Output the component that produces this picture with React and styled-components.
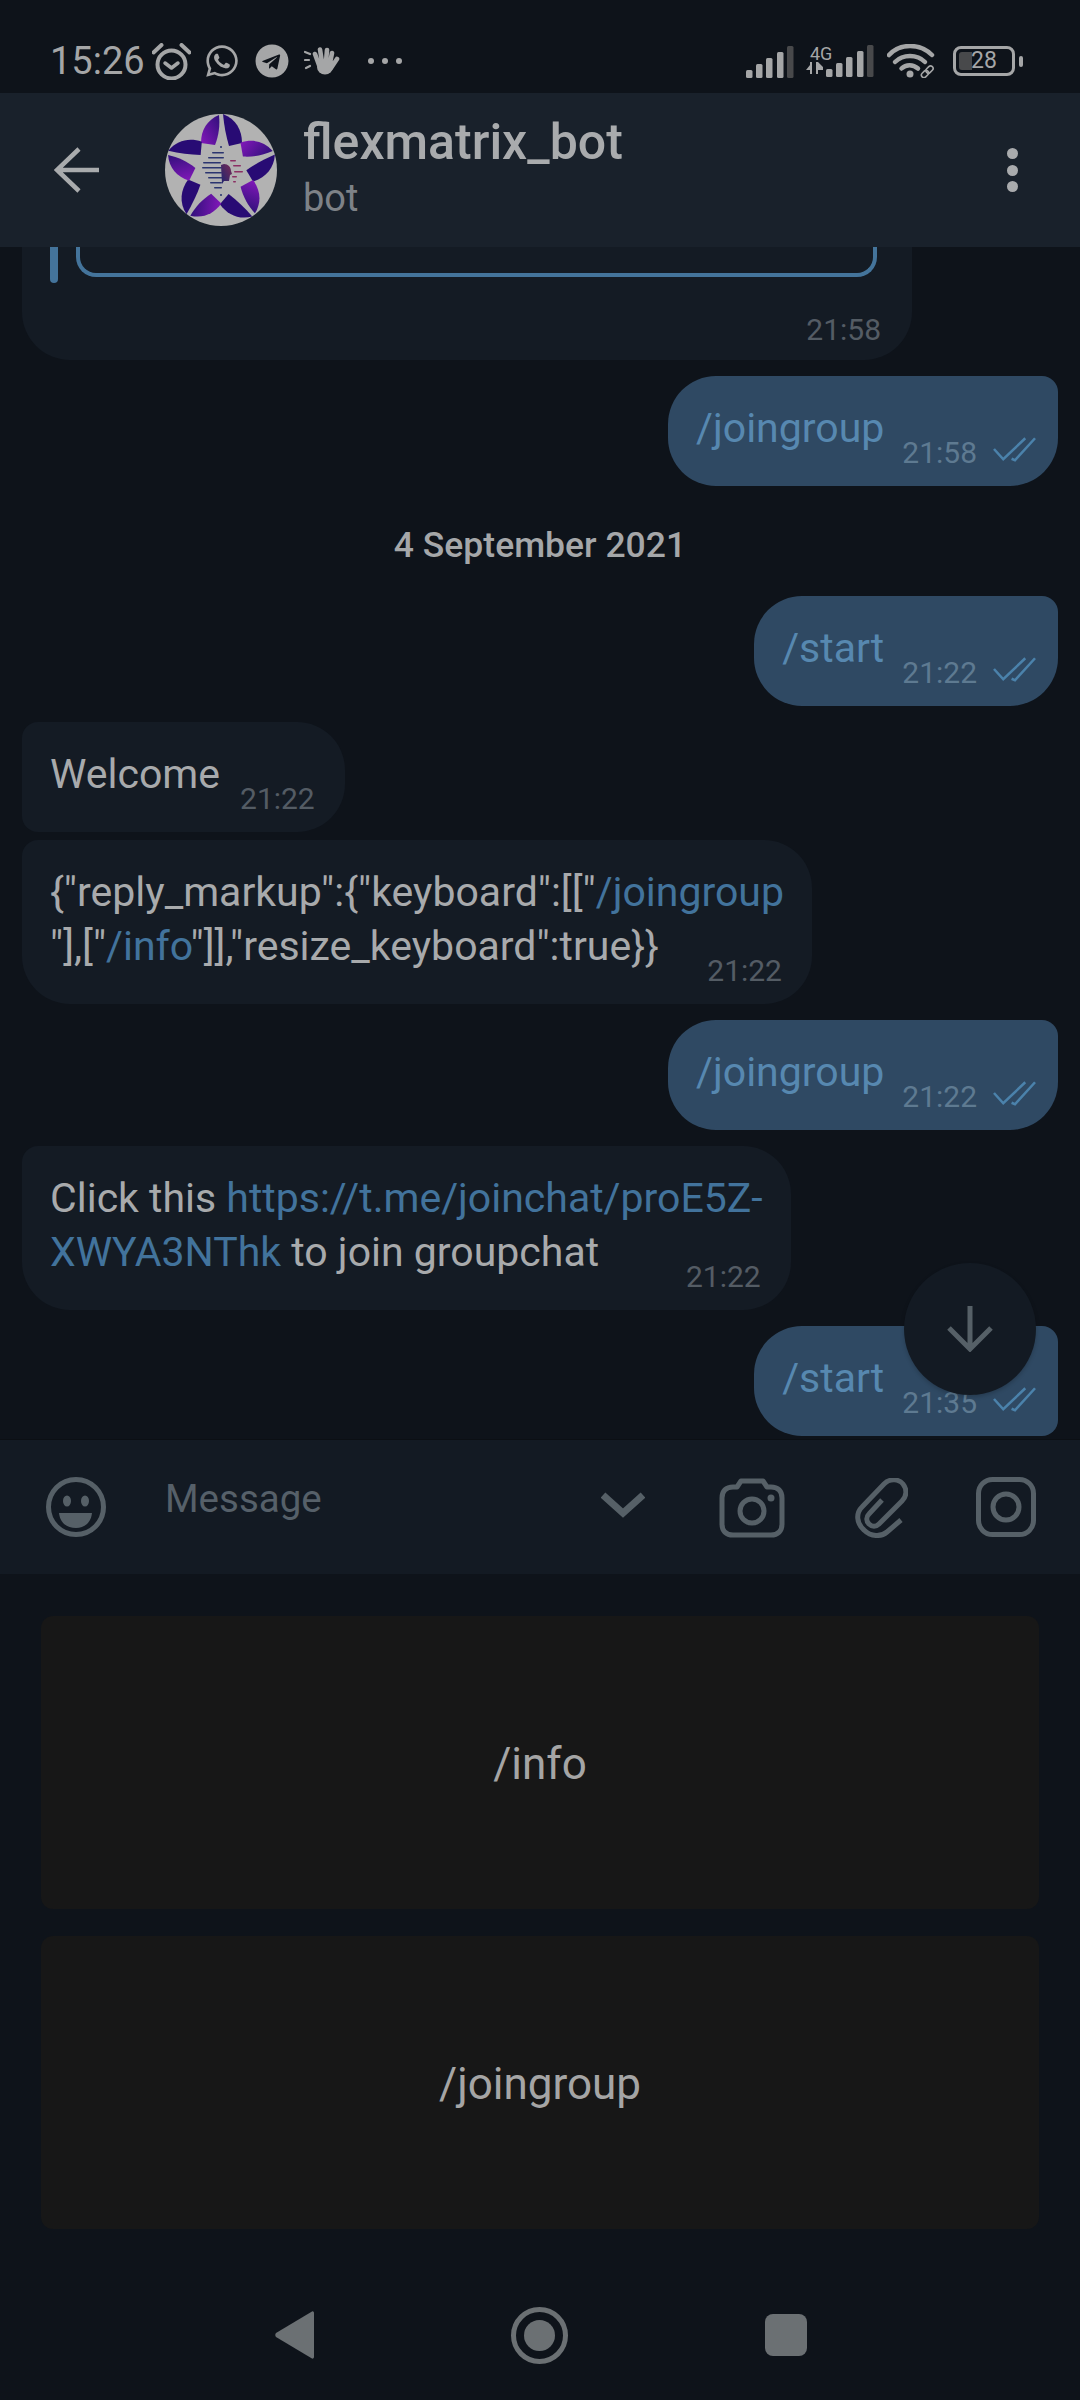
import React from 'react';
import styled, { createGlobalStyle } from 'styled-components';
import { FaWhatsapp, FaTelegram } from 'react-icons/fa';

const Global = createGlobalStyle`
  html, body { margin: 0; padding: 0; background: #0e131a; }
  * { box-sizing: border-box; }
  body { font-family: Roboto, "Liberation Sans", sans-serif; }
`;

const Page = styled.div`
  width: 1080px;
  height: 2400px;
  display: flex;
  flex-direction: column;
  background: #0e131a;
  overflow: hidden;
  color: #a8aaac;
`;

const StatusBar = styled.div`
  height: 93px;
  flex: none;
  display: flex;
  align-items: center;
  padding: 29px 57px 0 50px;
  color: #a5a6a7;
`;
const Clock = styled.span`
  font-size: 38px;
  line-height: 44px;
`;
const Slot = styled.span`
  display: flex;
  margin-left: ${p => p.$ml || 0}px;
  margin-top: ${p => p.$mt || 0}px;
`;
const RightGroup = styled.div`
  margin-left: auto;
  display: flex;
  align-items: center;
`;
const NetBlock = styled.div`
  width: 20px;
  margin-left: 12px;
  display: flex;
  flex-direction: column;
  align-items: flex-start;
`;
const NetLabel = styled.span`
  font-size: 18px;
  line-height: 17px;
  color: #a5a6a7;
  margin-left: 4px;
  margin-top: -3px;
`;
const Battery = styled.div`
  position: relative;
  width: 62px;
  height: 30px;
  margin-left: 18px;
  border: 3px solid #a5a6a7;
  border-radius: 8px;
  padding-left: 3px;
  display: flex;
  align-items: center;
`;
const BatteryFill = styled.span`
  width: 13px;
  height: 18px;
  background: #48494b;
  border-radius: 3px 0 0 3px;
`;
const BatteryText = styled.span`
  font-size: 23px;
  line-height: 24px;
  color: #a5a6a7;
  margin-left: -1px;
`;
const BatteryCap = styled.span`
  width: 4px;
  height: 11px;
  margin-left: 4px;
  background: #a5a6a7;
  border-radius: 2px;
`;

const Header = styled.div`
  height: 154px;
  flex: none;
  background: #19212b;
  display: flex;
  align-items: center;
  padding: 0 62px 0 54px;
  position: relative;
  z-index: 2;
`;
const HeaderInfo = styled.div`
  margin-left: 26px;
  display: flex;
  flex-direction: column;
  flex: 1;
`;
const Title = styled.div`
  font-size: 50px;
  line-height: 53px;
  font-weight: 500;
  color: #a9abad;
`;
const Subtitle = styled.div`
  font-size: 38px;
  line-height: 53px;
  margin-top: 3px;
  color: #7e8287;
`;
const AvatarSlot = styled.div`
  margin-left: 66px;
  display: flex;
`;
const MoreDots = styled.div`
  display: flex;
  flex-direction: column;
  gap: 5.5px;
`;
const MoreDot = styled.span`
  width: 11px;
  height: 11px;
  border-radius: 50%;
  background: #a9abad;
`;

const Chat = styled.div`
  position: relative;
  height: 1192px;
  flex: none;
  display: flex;
  flex-direction: column;
  overflow: hidden;
  padding: 0 22px;
`;
const TopBubble = styled.div`
  height: 113px;
  width: 890px;
  background: #141b24;
  border-radius: 0 0 48px 48px;
  padding-left: 28px;
  position: relative;
  display: flex;
  flex-direction: column;
`;
const InlineRow = styled.div`
  display: flex;
  gap: 18px;
  align-items: flex-start;
`;
const QuoteBar = styled.span`
  width: 8px;
  height: 36px;
  background: #44749b;
  border-radius: 0 0 4px 4px;
`;
const KeyBox = styled.div`
  width: 801px;
  height: 30px;
  border: 4px solid #44749b;
  border-top: none;
  border-radius: 0 0 20px 20px;
`;
const TopMeta = styled.span`
  align-self: flex-end;
  margin: 32px 31px 0 0;
  font-size: 30px;
  line-height: 30px;
  color: #545c64;
`;
const Bubble = styled.div`
  align-self: ${p => (p.$out ? 'flex-end' : 'flex-start')};
  margin-top: ${p => p.$mt}px;
  background: ${p => (p.$out ? '#2f4963' : '#141b24')};
  border-radius: ${p => p.$radius};
  padding: 25px ${p => (p.$out ? 22 : 28)}px 18px 28px;
  display: flex;
  flex-direction: ${p => (p.$multi ? 'column' : 'row')};
  flex: none;
`;
const MsgText = styled.div`
  font-size: 41px;
  line-height: 54px;
  white-space: nowrap;
  color: ${p => (p.$out ? '#5788b0' : '#a8aaac')};
`;
const Link = styled.span`
  color: #42739c;
`;
const Meta = styled.div`
  display: flex;
  align-items: center;
  flex: none;
  height: 30px;
  margin-top: 37px;
  margin-left: ${p => (p.$out ? 18 : 20)}px;
  margin-right: ${p => (p.$out ? 0 : 2)}px;
  font-size: 30px;
  line-height: 30px;
  color: ${p => (p.$out ? '#5e7a91' : '#545c64')};
`;
const MultiMeta = styled(Meta)`
  align-self: flex-end;
  margin-top: -17px;
`;
const Check = styled.svg`
  margin-left: 16px;
  margin-top: -7px;
`;
const DateLabel = styled.div`
  height: 110px;
  flex: none;
  display: flex;
  align-items: center;
  justify-content: center;
  padding-top: 8px;
  font-size: 35.5px;
  font-weight: 500;
  color: #a5a7a9;
`;
const Fab = styled.div`
  position: absolute;
  left: 904px;
  top: 1016px;
  width: 132px;
  height: 132px;
  border-radius: 50%;
  background: #131a23;
  box-shadow: 0 2px 4px rgba(0,0,0,.2);
  display: flex;
  align-items: center;
  justify-content: center;
`;

const InputBar = styled.div`
  height: 135px;
  flex: none;
  background: #131a23;
  border-top: 1px solid #0b0f14;
  display: flex;
  align-items: flex-start;
  padding: 37px 44px 0 46px;
`;
const Placeholder = styled.div`
  margin-left: 59px;
  flex: 1;
  font-size: 38.5px;
  line-height: 44px;
  color: #566069;
`;
const BarIcon = styled.svg`
  flex: none;
  margin-left: ${p => p.$ml || 0}px;
  margin-top: ${p => p.$mt || 0}px;
`;

const Keyboard = styled.div`
  flex: none;
  display: flex;
  flex-direction: column;
  gap: 27px;
  padding: 42px 41px 0;
`;
const Key = styled.div`
  height: 293px;
  background: #171717;
  border-radius: 12px;
  padding-top: 3px;
  display: flex;
  align-items: center;
  justify-content: center;
  font-size: 44px;
  color: #a5a5a5;
`;
const NavBar = styled.div`
  flex: 1;
  display: flex;
  align-items: center;
  justify-content: center;
  gap: 197px;
  padding: 41px 0 0 2px;
`;
const NavSquare = styled.span`
  width: 42px;
  height: 42px;
  border-radius: 8px;
  background: #6b7073;
`;

const icon = '#566067';

const Signal = () => (
  <svg width="48" height="32" viewBox="0 0 48 32">
    {[[0, 8], [10, 14], [20, 20], [31, 26], [41, 32]].map(([x, h], i) => (
      <rect key={x} x={x} y={32 - h} width="6.5" height={h} rx="1.5" fill={i === 4 ? '#48494b' : '#a5a6a7'} />
    ))}
  </svg>
);

const Alarm = () => (
  <svg width="39" height="37" viewBox="0 0 39 37" fill="none" stroke="#a5a6a7">
    <circle cx="19.5" cy="21.5" r="14" strokeWidth="4" />
    <path d="M1.5 9.5 9.5 2M37.5 9.5 29.5 2" strokeWidth="4" strokeLinecap="round" />
    <path d="M13 20l6.5 5 6.5-5" strokeWidth="3.5" strokeLinecap="round" strokeLinejoin="round" />
  </svg>
);

const WaveHand = () => (
  <svg width="36" height="30" viewBox="0 0 36 30" fill="none" stroke="#a5a6a7" strokeLinecap="round">
    <path d="M1 6 6 8M1 14H5M2 22 6 20" strokeWidth="2.2" />
    <path d="M15 19 11 8M18 16 16 3.5M22 16 23 4M26 17 28 7M27 22 33 13" strokeWidth="4.6" />
    <ellipse cx="21" cy="21" rx="8" ry="7.5" fill="#a5a6a7" stroke="none" />
  </svg>
);

const Wifi = () => (
  <svg width="48" height="34" viewBox="0 0 48 34" fill="none" stroke="#a5a6a7" strokeLinecap="round">
    <path d="M2 11C13 -1 33 -1 45 11" strokeWidth="4.5" />
    <path d="M8 18C16 10 30 10 38 18" strokeWidth="4.5" />
    <path d="M14.5 24.5C19 20 26 20 31 24.5" strokeWidth="4.5" />
    <circle cx="23" cy="30" r="3.5" fill="#a5a6a7" stroke="none" />
    <g strokeWidth="1.6">
      <rect x="34" y="27.5" width="8" height="5" rx="2.5" transform="rotate(-45 38 30)" fill="#0e131a" />
      <rect x="38.5" y="23" width="8" height="5" rx="2.5" transform="rotate(-45 42.5 25.5)" />
    </g>
  </svg>
);

const Avatar = () => (
  <svg width="112" height="112" viewBox="-56 -56 112 112">
    <defs>
      <linearGradient id="petalA" x1="0" y1="1" x2="1" y2="0">
        <stop offset="0" stopColor="#8418bb" />
        <stop offset="1" stopColor="#30107a" />
      </linearGradient>
      <linearGradient id="head" x1="0" y1="1" x2="1" y2="0">
        <stop offset="0" stopColor="#1c2470" />
        <stop offset="1" stopColor="#7a2a55" />
      </linearGradient>
    </defs>
    <circle r="56" fill="#b2b2b2" />
    {[0, 72, 144, 216, 288].map(a => (
      <g key={a} transform={`rotate(${a})`}>
        <path d="M-2 -55C-14 -50 -20 -40 -20 -27L-6 -25C-2 -35 -1 -45 -2 -55Z" fill="url(#petalA)" />
        <path d="M2 -56C3 -45 5 -34 8 -24L21 -27C21 -40 15 -51 2 -56Z" fill="#280b74" />
      </g>
    ))}
    {[[-9, -18, 12], [-13, -13, 16], [-18, -8, 18], [-19, -3, 20], [-16, 2, 17], [-13, 7, 15], [-11, 12, 12], [-7, 17, 8]].map(([x, y, w]) => (
      <rect key={y} x={x} y={y} width={w} height="1.5" rx="0.75" fill="#2b3570" />
    ))}
    {[[9, -10, 6], [12, -5, 8], [13, 1, 9], [11, 6, 5], [12, 11, 3]].map(([x, y, w]) => (
      <rect key={y} x={x} y={y} width={w} height="1.5" rx="0.75" fill="#8b2f63" />
    ))}
    <path d="M3 -6C7 -6 10 -3 10 1L11 4 9 5 8 11 3 11 1 14 0 -5Z" fill="url(#head)" />
    <circle cy="-23" r="1" fill="#23306e" />
    <circle cy="25" r="1" fill="#23306e" />
  </svg>
);

const Ticks = () => (
  <Check width="43" height="25" viewBox="0 0 44 25" fill="none" stroke="#4b82ab" strokeWidth="2.6">
    <path d="M1 12 10.5 22.5 33 1" />
    <path d="M19 22 22.5 23.5 43 1" />
  </Check>
);

const OUT = '48px 16px 48px 48px';
const OUT_LAST = '48px 16px 16px 48px';
const IN_MID = '16px 48px 48px 16px';
const IN = '16px 48px 48px 48px';

export default function App() {
  return (
    <Page>
      <Global />
      <StatusBar>
        <Clock>15:26</Clock>
        <Slot $ml={7}><Alarm /></Slot>
        <Slot $ml={13}><FaWhatsapp size={36} /></Slot>
        <Slot $ml={15}><FaTelegram size={34} /></Slot>
        <Slot $ml={15}><WaveHand /></Slot>
        <Slot $ml={27}>
          <svg width="36" height="8" viewBox="0 0 36 8" fill="#a5a6a7">
            <circle cx="4" cy="4" r="3" /><circle cx="18" cy="4" r="3" /><circle cx="32" cy="4" r="3" />
          </svg>
        </Slot>
        <RightGroup>
          <Slot $mt={2}><Signal /></Slot>
          <NetBlock>
            <NetLabel>4G</NetLabel>
            <svg width="20" height="12" viewBox="0 0 20 12" fill="#a5a6a7">
              <path d="M6 0V12H4V8H0L4 3V0ZM10 0H12L17 5V8H12V12H10Z" />
            </svg>
          </NetBlock>
          <Slot><Signal /></Slot>
          <Slot $ml={13}><Wifi /></Slot>
          <Battery>
            <BatteryFill />
            <BatteryText>28</BatteryText>
          </Battery>
          <BatteryCap />
        </RightGroup>
      </StatusBar>

      <Header>
        <svg width="45" height="46" viewBox="0 0 45 46" fill="none" stroke="#a9abad" strokeWidth="4.5">
          <path d="M45 23H3M25 2 3 23l22 21" />
        </svg>
        <AvatarSlot><Avatar /></AvatarSlot>
        <HeaderInfo>
          <Title>flexmatrix_bot</Title>
          <Subtitle>bot</Subtitle>
        </HeaderInfo>
        <MoreDots><MoreDot /><MoreDot /><MoreDot /></MoreDots>
      </Header>

      <Chat>
        <TopBubble>
          <InlineRow>
            <QuoteBar />
            <KeyBox />
          </InlineRow>
          <TopMeta>21:58</TopMeta>
        </TopBubble>

        <Bubble $out $mt={16} $radius={OUT}>
          <MsgText $out>/joingroup</MsgText>
          <Meta $out>21:58<Ticks /></Meta>
        </Bubble>

        <DateLabel>4 September 2021</DateLabel>

        <Bubble $out $mt={0} $radius={OUT}>
          <MsgText $out>/start</MsgText>
          <Meta $out>21:22<Ticks /></Meta>
        </Bubble>

        <Bubble $mt={16} $radius={IN_MID}>
          <MsgText>Welcome</MsgText>
          <Meta>21:22</Meta>
        </Bubble>

        <Bubble $multi $mt={8} $radius={IN}>
          <MsgText>
            {'{"reply_markup":{"keyboard":[["'}<Link>/joingroup</Link><br />
            {'"],["'}<Link>/info</Link>{'"]],"resize_keyboard":true}}'}
          </MsgText>
          <MultiMeta>21:22</MultiMeta>
        </Bubble>

        <Bubble $out $mt={16} $radius={OUT}>
          <MsgText $out>/joingroup</MsgText>
          <Meta $out>21:22<Ticks /></Meta>
        </Bubble>

        <Bubble $multi $mt={16} $radius={IN}>
          <MsgText>
            Click this <Link>https://t.me/joinchat/proE5Z-</Link><br />
            <Link>XWYA3NThk</Link> to join groupchat
          </MsgText>
          <MultiMeta>21:22</MultiMeta>
        </Bubble>

        <Bubble $out $mt={16} $radius={OUT_LAST}>
          <MsgText $out>/start</MsgText>
          <Meta $out>21:35<Ticks /></Meta>
        </Bubble>

        <Fab>
          <svg width="46" height="46" viewBox="0 0 46 46" fill="none" stroke={icon} strokeWidth="5">
            <path d="M23 0V42M2 22 23 43 44 22" />
          </svg>
        </Fab>
      </Chat>

      <InputBar>
        <svg width="60" height="60" viewBox="0 0 60 60" fill="none" stroke={icon} strokeWidth="5">
          <circle cx="30" cy="30" r="27.5" />
          <ellipse cx="21" cy="24" rx="4" ry="5.5" fill={icon} stroke="none" />
          <ellipse cx="39" cy="24" rx="4" ry="5.5" fill={icon} stroke="none" />
          <path d="M13 36H46C45 46 38 51 30 51C21 51 14 46 13 36Z" fill={icon} stroke="none" />
        </svg>
        <Placeholder>Message</Placeholder>
        <BarIcon width="44" height="26" viewBox="0 0 44 26" fill="none" stroke={icon} strokeWidth="7" $mt={15}>
          <path d="M2 3 22 21 42 3" />
        </BarIcon>
        <BarIcon width="66" height="60" viewBox="0 0 66 60" fill="none" stroke={icon} strokeWidth="5" $ml={74} $mt={1}>
          <path d="M18 9 22 3H44L48 9H52C59 9 63 13 63 20V46C63 53 59 57 52 57H14C7 57 3 53 3 46V20C3 13 7 9 14 9Z" strokeLinejoin="round" />
          <circle cx="33" cy="33" r="12" />
          <circle cx="52" cy="20" r="3.5" fill={icon} stroke="none" />
        </BarIcon>
        <BarIcon width="53" height="60" viewBox="0 0 53 60" fill="none" stroke={icon} strokeWidth="5" $ml={70} $mt={1}>
          <path d="M46 42 32 54C26 59 16 59 9 52 1 45 1 35 7 29L29 6C35 0 44 1 48 6 52 11 52 18 47 23L24 46C21 49 17 49 14 46 11 43 11 39 14 36L27 22" />
        </BarIcon>
        <BarIcon width="60" height="60" viewBox="0 0 60 60" fill="none" stroke={icon} strokeWidth="5" $ml={68}>
          <rect x="2.5" y="2.5" width="55" height="55" rx="14" />
          <circle cx="30" cy="30" r="13" />
        </BarIcon>
      </InputBar>

      <Keyboard>
        <Key>/info</Key>
        <Key>/joingroup</Key>
      </Keyboard>

      <NavBar>
        <svg width="39" height="48" viewBox="0 0 39 48" fill="#6b7073">
          <path d="M1 22 37 .5C38 0 39 1 39 2V46C39 47 38 48 37 47.5L1 26C0 25 0 23 1 22Z" />
        </svg>
        <svg width="57" height="57" viewBox="0 0 57 57" fill="none">
          <circle cx="28.5" cy="28.5" r="26" stroke="#6b7073" strokeWidth="5" />
          <circle cx="28.5" cy="28.5" r="15.5" fill="#6b7073" />
        </svg>
        <NavSquare />
      </NavBar>
    </Page>
  );
}
